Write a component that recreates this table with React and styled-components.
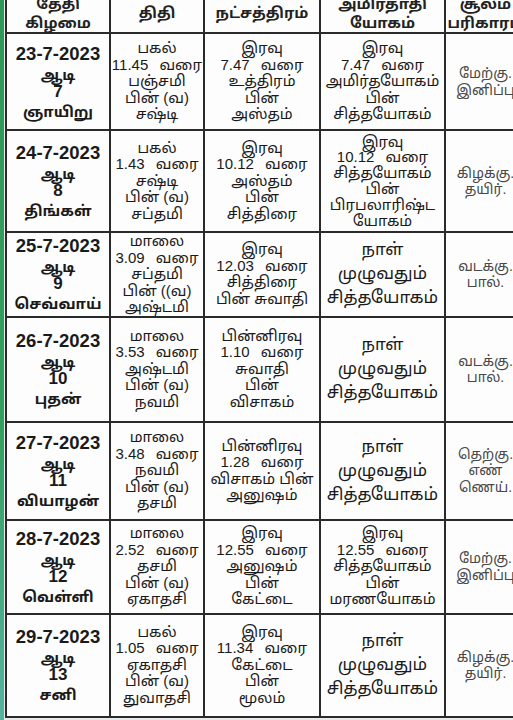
import React from 'react';
import styled, { createGlobalStyle } from 'styled-components';

const GlobalStyle = createGlobalStyle`
  html, body {
    margin: 0;
    padding: 0;
    overflow: hidden;
    background: #cdd8da;
  }
`;

const FONT = `"Liberation Sans", "Noto Sans Tamil", "Lohit Tamil", "Noto Sans", sans-serif`;

const Page = styled.div`
  display: flex;
  width: 513px;
  height: 720px;
  overflow: hidden;
`;

const GreenEdge = styled.div`
  flex: 0 0 4px;
  background: linear-gradient(180deg, #2f9856 0%, #33a060 60%, #56b3a0 100%);
`;

const Sheet = styled.div`
  flex: 1 0 auto;
  display: flex;
  flex-direction: column;
  padding-left: 1px;
  background: #e6eaea;
`;

const Table = styled.table`
  margin-top: -9px;
  border-collapse: collapse;
  table-layout: fixed;
  width: 520px;
  background: #fdfdfd;
  font-family: ${FONT};
  color: #1a1a1a;
`;

const HeadCell = styled.th`
  border: 2px solid #2a2a2a;
  font-size: 15px;
  font-weight: 700;
  line-height: 19px;
  text-align: center;
  vertical-align: middle;
  padding: 0;
  color: #222;
`;

const Cell = styled.td`
  border: 2px solid #2a2a2a;
  text-align: center;
  vertical-align: middle;
  padding: 0;
  font-size: ${(p) => (p.$big ? '17px' : p.$side ? '14px' : '15px')};
  line-height: ${(p) => (p.$big ? '24px' : p.$tight ? '15.8px' : '16.5px')};
  color: ${(p) => (p.$side ? '#484848' : '#1a1a1a')};
`;

const Line = styled.div`
  white-space: nowrap;
  word-spacing: ${(p) => (p.$wide ? '7px' : 'normal')};
`;

const DateLine = styled.div`
  font-weight: 700;
  white-space: nowrap;
  font-size: ${(p) => (p.$date ? '18.5px' : p.$num ? '17px' : '15px')};
  line-height: ${(p) => (p.$date ? '25px' : p.$day ? '22px' : p.$num ? '18px' : '17px')};
`;

const widths = [104, 94, 116, 125, 81];

const rows = [
  {
    h: 97,
    date: ['23-7-2023', 'ஆடி', '7', 'ஞாயிறு'],
    thithi: ['பகல்', '11.45 வரை', 'பஞ்சமி', 'பின் (வ)', 'சஷ்டி'],
    star: ['இரவு', '7.47 வரை', 'உத்திரம்', 'பின்', 'அஸ்தம்'],
    yogam: ['இரவு', '7.47 வரை', 'அமிர்தயோகம்', 'பின்', 'சித்தயோகம்'],
    soolam: ['மேற்கு.', 'இனிப்பு'],
  },
  {
    h: 102,
    date: ['24-7-2023', 'ஆடி', '8', 'திங்கள்'],
    thithi: ['பகல்', '1.43 வரை', 'சஷ்டி', 'பின் (வ)', 'சப்தமி'],
    star: ['இரவு', '10.12 வரை', 'அஸ்தம்', 'பின்', 'சித்திரை'],
    yogam: ['இரவு', '10.12 வரை', 'சித்தயோகம்', 'பின்', 'பிரபலாரிஷ்ட', 'யோகம்'],
    tight: true,
    soolam: ['கிழக்கு.', 'தயிர்.'],
  },
  {
    h: 84,
    date: ['25-7-2023', 'ஆடி', '9', 'செவ்வாய்'],
    thithi: ['மாலை', '3.09 வரை', 'சப்தமி', 'பின் ((வ)', 'அஷ்டமி'],
    star: ['இரவு', '12.03 வரை', 'சித்திரை', 'பின் சுவாதி'],
    yogam: ['நாள்', 'முழுவதும்', 'சித்தயோகம்'],
    big: true,
    soolam: ['வடக்கு.', 'பால்.'],
  },
  {
    h: 105,
    date: ['26-7-2023', 'ஆடி', '10', 'புதன்'],
    thithi: ['மாலை', '3.53 வரை', 'அஷ்டமி', 'பின் (வ)', 'நவமி'],
    star: ['பின்னிரவு', '1.10 வரை', 'சுவாதி', 'பின்', 'விசாகம்'],
    yogam: ['நாள்', 'முழுவதும்', 'சித்தயோகம்'],
    big: true,
    soolam: ['வடக்கு.', 'பால்.'],
  },
  {
    h: 98,
    date: ['27-7-2023', 'ஆடி', '11', 'வியாழன்'],
    thithi: ['மாலை', '3.48 வரை', 'நவமி', 'பின் (வ)', 'தசமி'],
    star: ['பின்னிரவு', '1.28 வரை', 'விசாகம் பின்', 'அனுஷம்'],
    yogam: ['நாள்', 'முழுவதும்', 'சித்தயோகம்'],
    big: true,
    soolam: ['தெற்கு.', 'எண்', 'ணெய்.'],
  },
  {
    h: 94,
    date: ['28-7-2023', 'ஆடி', '12', 'வெள்ளி'],
    thithi: ['மாலை', '2.52 வரை', 'தசமி', 'பின் (வ)', 'ஏகாதசி'],
    star: ['இரவு', '12.55 வரை', 'அனுஷம்', 'பின்', 'கேட்டை'],
    yogam: ['இரவு', '12.55 வரை', 'சித்தயோகம்', 'பின்', 'மரணயோகம்'],
    soolam: ['மேற்கு.', 'இனிப்பு'],
  },
  {
    h: 103,
    date: ['29-7-2023', 'ஆடி', '13', 'சனி'],
    thithi: ['பகல்', '1.05 வரை', 'ஏகாதசி', 'பின் (வ)', 'துவாதசி'],
    star: ['இரவு', '11.34 வரை', 'கேட்டை', 'பின்', 'மூலம்'],
    yogam: ['நாள்', 'முழுவதும்', 'சித்தயோகம்'],
    big: true,
    soolam: ['கிழக்கு.', 'தயிர்.'],
  },
];

const isTime = (t) => /^\d/.test(t);

function Lines({ items }) {
  return items.map((t, i) => (
    <Line key={i} $wide={isTime(t)}>
      {t}
    </Line>
  ));
}

function App() {
  return (
    <Page>
      <GlobalStyle />
      <GreenEdge />
      <Sheet>
        <Table>
          <colgroup>
            {widths.map((w, i) => (
              <col key={i} style={{ width: w }} />
            ))}
          </colgroup>
          <thead>
            <tr style={{ height: 41 }}>
              <HeadCell>
                <Line>தேதி</Line>
                <Line>கிழமை</Line>
              </HeadCell>
              <HeadCell>திதி</HeadCell>
              <HeadCell>நட்சத்திரம்</HeadCell>
              <HeadCell>
                <Line>அமிர்தாதி</Line>
                <Line>யோகம்</Line>
              </HeadCell>
              <HeadCell>
                <Line>சூலம்</Line>
                <Line>பரிகாரம்</Line>
              </HeadCell>
            </tr>
          </thead>
          <tbody>
            {rows.map((r) => (
              <tr key={r.date[0]} style={{ height: r.h }}>
                <Cell>
                  <DateLine $date>{r.date[0]}</DateLine>
                  <DateLine>{r.date[1]}</DateLine>
                  <DateLine $num>{r.date[2]}</DateLine>
                  <DateLine $day>{r.date[3]}</DateLine>
                </Cell>
                <Cell>
                  <Lines items={r.thithi} />
                </Cell>
                <Cell>
                  <Lines items={r.star} />
                </Cell>
                <Cell $big={r.big} $tight={r.tight}>
                  <Lines items={r.yogam} />
                </Cell>
                <Cell $side>
                  <Lines items={r.soolam} />
                </Cell>
              </tr>
            ))}
          </tbody>
        </Table>
      </Sheet>
    </Page>
  );
}

export default App;
